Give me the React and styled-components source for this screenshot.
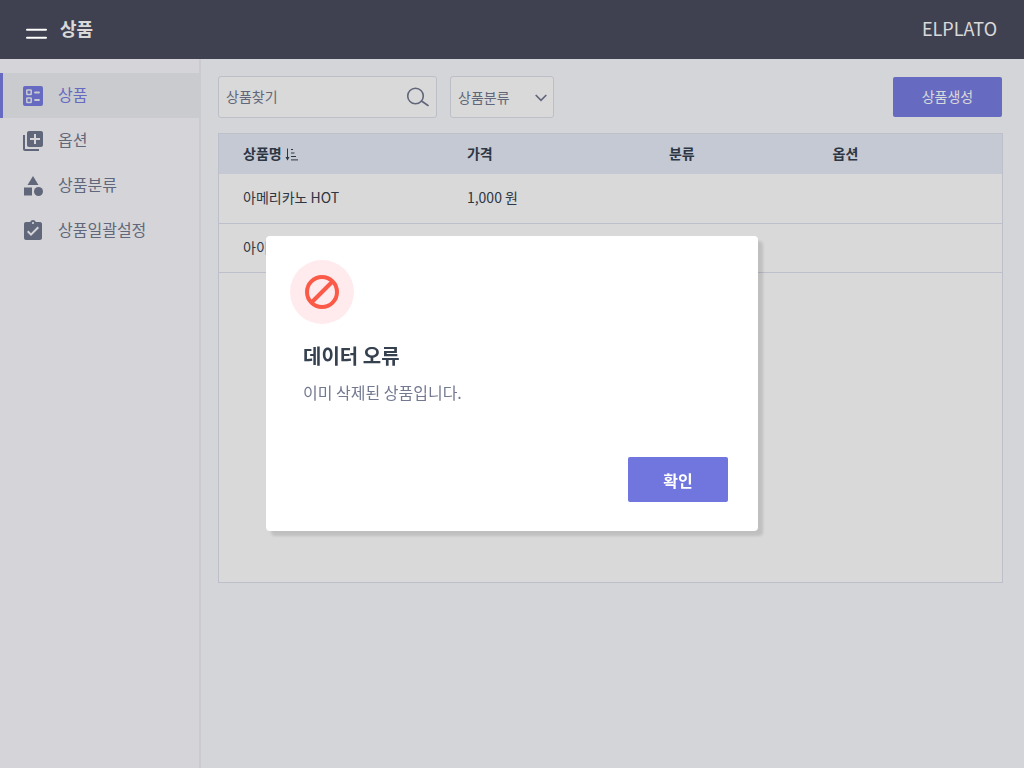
import React from 'react';
import styled, { createGlobalStyle } from 'styled-components';
import { MdLibraryAdd, MdCategory, MdAssignmentTurnedIn } from 'react-icons/md';

const GlobalStyle = createGlobalStyle`
  *, *::before, *::after { box-sizing: border-box; }
  body { margin: 0; background: #f9fbff; }
  body, button, input, select {
    font-family: "Noto Sans CJK KR", "Noto Sans", sans-serif;
  }
  button { cursor: pointer; }
`;

const Page = styled.div`
  display: flex;
  flex-direction: column;
  min-height: 100vh;
  color: #36414f;
`;

const Header = styled.header`
  display: flex;
  align-items: center;
  height: 59px;
  padding: 0 27px 4px 25px;
  background: #4b4c5e;
  color: #fff;
`;

const MenuButton = styled.button`
  position: relative;
  z-index: 20;
  display: flex;
  margin-top: 12px;
  padding: 0;
  border: 0;
  background: none;
  color: #fff;
`;

const PageTitle = styled.h1`
  flex: 1;
  margin: 0 0 0 12px;
  font-size: 18px;
  line-height: 28px;
  font-weight: 700;
`;

const Brand = styled.span`
  font-size: 18px;
  line-height: 28px;
`;

const Body = styled.div`
  display: flex;
  flex: 1;
`;

const Sidebar = styled.nav`
  flex: 0 0 201px;
  padding-top: 14px;
  border-right: 2px solid #eeeff4;
  background: #fbfbff;
`;

const NavList = styled.ul`
  margin: 0;
  padding: 0;
  list-style: none;
`;

const NavLink = styled.a`
  display: flex;
  align-items: center;
  gap: 13px;
  height: 45px;
  padding-left: 18px;
  border-left: 3px solid ${(p) => (p.$active ? '#787de2' : 'transparent')};
  background: ${(p) => (p.$active ? '#eeeff3' : 'transparent')};
  color: ${(p) => (p.$active ? '#787de2' : '#737990')};
  font-size: 16px;
  line-height: 24px;
  text-decoration: none;
`;

const NavLabel = styled.span`
  padding-bottom: 4px;
`;

const Main = styled.main`
  flex: 1;
  min-width: 0;
  padding: 17px 21px 24px 17px;
`;

const Toolbar = styled.div`
  display: flex;
  align-items: center;
  gap: 13px;
  margin-bottom: 15px;
  padding-right: 1px;
`;

const Field = styled.label`
  display: flex;
  align-items: center;
  width: ${(p) => p.$width};
  height: 42px;
  padding: 0 6px 0 7px;
  border: 1px solid #dfe1eb;
  border-radius: 3px;
  background: #fff;
  color: #737990;
`;

const SearchInput = styled.input`
  flex: 1;
  min-width: 0;
  padding: 0 0 2px;
  border: 0;
  outline: 0;
  background: transparent;
  color: #737990;
  font-size: 14px;
  line-height: 20px;
  &::placeholder { color: #737990; opacity: 1; }
`;

const CategorySelect = styled.select`
  flex: 1;
  min-width: 0;
  padding: 0;
  border: 0;
  outline: 0;
  appearance: none;
  background: transparent;
  color: inherit;
  font-size: 14px;
  line-height: 20px;
`;

const CreateButton = styled.button`
  width: 109px;
  height: 40px;
  margin-left: auto;
  padding: 0 0 2px;
  border: 0;
  border-radius: 2px;
  background: #787de2;
  color: #fff;
  font-size: 14px;
`;

const TablePanel = styled.section`
  min-height: 450px;
  border: 1px solid #dee1ee;
  background: #fff;
`;

const Table = styled.table`
  width: 100%;
  table-layout: fixed;
  border-collapse: collapse;
  font-size: 14px;
  line-height: 20px;
`;

const HeadCell = styled.th`
  width: ${(p) => p.$width};
  height: 40px;
  padding: 0 0 2px 24px;
  background: #e7edfa;
  text-align: left;
  font-weight: 700;
`;

const Cell = styled.td`
  height: 49px;
  padding: 0 0 2px 24px;
  border-bottom: 1px solid #dee1ee;
`;

const SortIcon = styled.svg`
  margin-left: 3px;
  vertical-align: -2px;
`;

const Overlay = styled.div`
  position: fixed;
  inset: 0;
  z-index: 10;
  display: flex;
  align-items: center;
  justify-content: center;
  padding-bottom: 1px;
  background: rgba(0, 0, 0, 0.15);
`;

const Dialog = styled.div`
  display: flex;
  flex-direction: column;
  width: 492px;
  max-width: 90vw;
  min-height: 295px;
  padding: 24px 30px 29px 24px;
  border-radius: 4px;
  background: #fff;
  box-shadow: 5px 5px 3px rgba(0, 0, 0, 0.12);
`;

const IconBadge = styled.div`
  display: flex;
  align-items: center;
  justify-content: center;
  width: 64px;
  height: 64px;
  border-radius: 50%;
  background: #ffebed;
`;

const DialogTitle = styled.h2`
  margin: 18px 0 0 13px;
  font-size: 20px;
  line-height: 28px;
  font-weight: 700;
  color: #36414f;
`;

const DialogText = styled.p`
  margin: 10px 0 0 13px;
  font-size: 16px;
  line-height: 24px;
  color: #737990;
`;

const ConfirmButton = styled.button`
  align-self: flex-end;
  width: 100px;
  height: 45px;
  margin-top: auto;
  border: 0;
  border-radius: 2px;
  background: #7076dd;
  color: #fff;
  font-size: 16px;
  font-weight: 700;
`;

function BallotIcon({ size }) {
  return (
    <svg width={size} height={size} viewBox="0 0 24 24" fill="none">
      <rect x="2" y="2" width="20" height="20" rx="2" fill="currentColor" />
      <g stroke="#eeeff3" strokeWidth="1.5">
        <rect x="5.8" y="6" width="4.4" height="4.4" rx="0.5" />
        <rect x="5.8" y="14" width="4.4" height="4.4" rx="0.5" />
        <path d="M14 8.5H18M14 16H18" strokeWidth="1.8" strokeLinecap="round" />
      </g>
    </svg>
  );
}

const menu = [
  { label: '상품', Icon: BallotIcon },
  { label: '옵션', Icon: MdLibraryAdd },
  { label: '상품분류', Icon: MdCategory },
  { label: '상품일괄설정', Icon: MdAssignmentTurnedIn },
];

const products = [
  { name: '아메리카노 HOT', price: '1,000 원' },
  { name: '아이스 아메리카노', price: '' },
];

export default function App() {
  return (
    <Page>
      <GlobalStyle />
      <Header>
        <MenuButton aria-label="메뉴">
          <svg width="23" height="14" viewBox="0 0 23 14" fill="none" stroke="currentColor" strokeWidth="2" strokeLinecap="round">
            <path d="M2 2.7H21M2 10.7H21" />
          </svg>
        </MenuButton>
        <PageTitle>상품</PageTitle>
        <Brand>ELPLATO</Brand>
      </Header>
      <Body>
        <Sidebar>
          <NavList>
            {menu.map(({ label, Icon }, i) => (
              <li key={label}>
                <NavLink href="#" $active={i === 0}>
                  <Icon size={24} />
                  <NavLabel>{label}</NavLabel>
                </NavLink>
              </li>
            ))}
          </NavList>
        </Sidebar>
        <Main>
          <Toolbar>
            <Field $width="219px">
              <SearchInput type="text" placeholder="상품찾기" aria-label="상품찾기" />
              <svg width="24" height="22" viewBox="0 0 24 22" fill="none" stroke="currentColor" strokeWidth="1.6" strokeLinecap="round">
                <circle cx="9.5" cy="10" r="7.8" />
                <path d="M15.5 15L22 19.5" />
              </svg>
            </Field>
            <Field $width="104px">
              <CategorySelect aria-label="상품분류" defaultValue="all">
                <option value="all">상품분류</option>
              </CategorySelect>
              <svg width="12" height="10" viewBox="0 0 12 10" fill="none" stroke="currentColor" strokeWidth="1.7">
                <path d="M0.7 3L6 8.3L11.3 3" />
              </svg>
            </Field>
            <CreateButton>상품생성</CreateButton>
          </Toolbar>
          <TablePanel>
            <Table>
              <thead>
                <tr>
                  <HeadCell $width="28.6%">
                    상품명
                    <SortIcon width="13" height="13" viewBox="0 0 13 13" fill="none" stroke="currentColor" strokeWidth="1">
                      <path d="M2.5 0.5V11M6 1.5H8M6 5H9.5M6 8.5H11M6 11.9H13" />
                      <path d="M0.5 9L2.5 12.5L4.5 9Z" fill="currentColor" stroke="none" />
                    </SortIcon>
                  </HeadCell>
                  <HeadCell $width="25.8%">가격</HeadCell>
                  <HeadCell $width="20.9%">분류</HeadCell>
                  <HeadCell>옵션</HeadCell>
                </tr>
              </thead>
              <tbody>
                {products.map((product) => (
                  <tr key={product.name}>
                    <Cell>{product.name}</Cell>
                    <Cell>{product.price}</Cell>
                    <Cell />
                    <Cell />
                  </tr>
                ))}
              </tbody>
            </Table>
          </TablePanel>
        </Main>
      </Body>
      <Overlay>
        <Dialog role="alertdialog" aria-modal="true" aria-labelledby="dialog-title" aria-describedby="dialog-text">
          <IconBadge>
            <svg width="34" height="34" viewBox="0 0 34 34" fill="none" stroke="#fb5a48" strokeWidth="4">
              <circle cx="17" cy="17" r="15" />
              <path d="M6.5 27.5L27.5 6.5" />
            </svg>
          </IconBadge>
          <DialogTitle id="dialog-title">데이터 오류</DialogTitle>
          <DialogText id="dialog-text">이미 삭제된 상품입니다.</DialogText>
          <ConfirmButton>확인</ConfirmButton>
        </Dialog>
      </Overlay>
    </Page>
  );
}
